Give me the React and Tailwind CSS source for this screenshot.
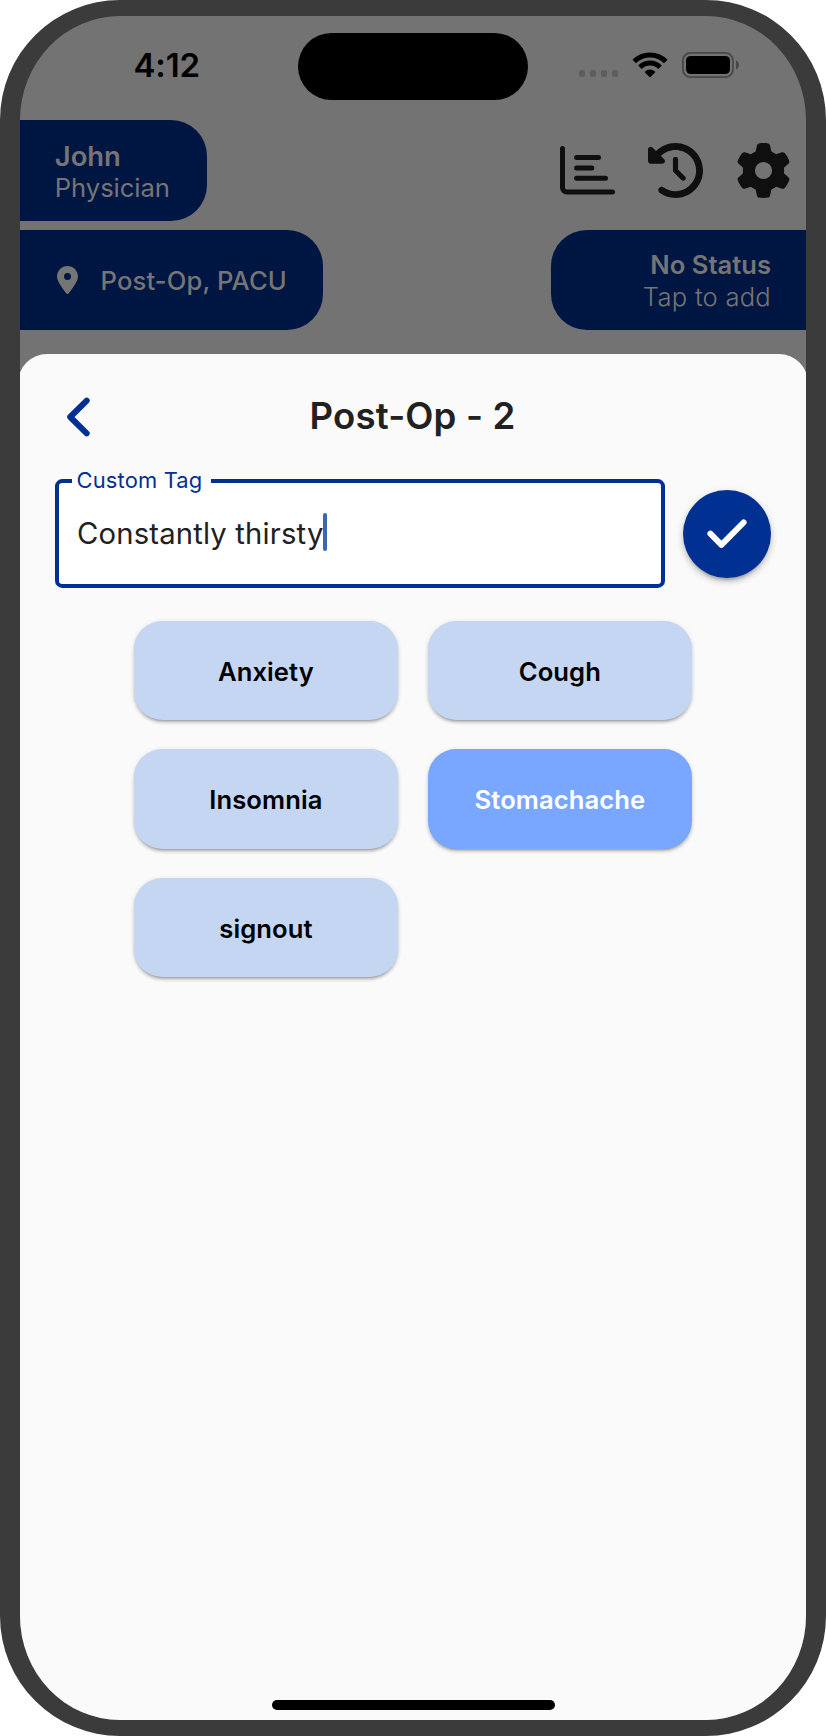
import React from "react";
import { FaClockRotateLeft, FaGear, FaLocationDot } from "react-icons/fa6";

const tags = [
  { label: "Anxiety" },
  { label: "Cough" },
  { label: "Insomnia" },
  { label: "Stomachache", selected: true },
  { label: "signout" },
];

function WifiIcon() {
  return (
    <svg width="36" height="26" viewBox="0 0 36 26" fill="none" stroke="black" strokeWidth="5">
      <path d="M2.230 9.530a22.300 22.300 0 0 1 31.540 0" />
      <path d="M7.960 15.260a14.200 14.200 0 0 1 20.080 0" />
      <path d="M18 24.600l-4.600-4.600a6.500 6.500 0 0 1 9.200 0z" fill="black" stroke="black" strokeWidth="1.200" strokeLinejoin="round" />
    </svg>
  );
}

function BatteryIcon() {
  return (
    <svg width="58" height="26" viewBox="0 0 58 26" fill="none">
      <rect x="0.9" y="0.9" width="50" height="24.200" rx="7.400" stroke="#484848" strokeWidth="1.800" />
      <rect x="4" y="3.900" width="44" height="18.200" rx="4.800" fill="black" />
      <path d="M54 8.600c1.800.8 3 2.400 3 4.400s-1.200 3.600-3 4.400z" fill="#484848" />
    </svg>
  );
}

function ChartIcon() {
  return (
    <svg width="55" height="55" viewBox="0 0 55 55" fill="none" stroke="#0f0f0f" strokeWidth="5" strokeLinecap="round" strokeLinejoin="round">
      <path d="M2.500 5.600V44.700a4.300 4.300 0 0 0 4.300 4.300H52.500" />
      <path d="M16.600 14.500H38.500M16.600 24.900H31.800M16.600 35.300H45.500" />
    </svg>
  );
}

function StatusBar() {
  return (
    <div className="flex h-[104.300px] shrink-0 pt-[16.500px]">
      <div className="flex h-[66px] w-[277.700px] items-center pl-[113.500px] text-[33px] leading-none font-semibold tracking-[-0.150px] text-black">
        4:12
      </div>
      <div className="h-[67.200px] w-[230.600px] rounded-full bg-black" />
      <div className="flex h-[65px] items-center pl-[50.400px]">
        <div className="mt-[17.500px] flex gap-[4.200px]">
          {[0, 1, 2, 3].map((i) => (
            <span key={i} className="size-[6.800px] rounded-[2.300px] bg-[#5d5d5d]" />
          ))}
        </div>
        <div className="ml-[13.200px]">
          <WifiIcon />
        </div>
        <div className="ml-[14px]">
          <BatteryIcon />
        </div>
      </div>
    </div>
  );
}

function Header() {
  return (
    <>
      <div className="flex h-[101px] shrink-0 items-center justify-between">
        <div className="h-full w-[187.300px] rounded-r-[36px] bg-[#001642] pt-[19.700px] pl-[34.800px] leading-[32.200px] text-[#757575]">
          <div className="text-[27.400px] font-semibold">John</div>
          <div className="text-[25.600px] tracking-[-0.050px]">Physician</div>
        </div>
        <div className="flex gap-[33px] pr-[15px] text-[#0f0f0f]">
          <ChartIcon />
          <FaClockRotateLeft className="size-[55px]" />
          <FaGear className="size-[55px]" />
        </div>
      </div>
      <div className="mt-[9.200px] flex h-[99.500px] shrink-0 justify-between text-[25.600px] text-[#757575]">
        <div className="flex w-[303px] items-center rounded-r-[36px] bg-[#001642] pt-[2px] pl-[37.300px] font-medium tracking-[0.120px]">
          <FaLocationDot className="-mt-[2px] h-[28px] w-[21px]" />
          <span className="ml-[22.300px]">Post-Op, PACU</span>
        </div>
        <div className="w-[255.200px] rounded-l-[36px] bg-[#001642] pt-[19px] pr-[35px] text-right leading-[31.500px]">
          <div className="font-semibold">No Status</div>
          <div className="font-light tracking-[0.240px]">Tap to add</div>
        </div>
      </div>
    </>
  );
}

function TagForm() {
  return (
    <div className="mt-[41px] flex items-center pl-[37px]">
      <div className="relative flex h-[108.700px] w-[610px] items-center rounded-[7.300px] border-4 border-[#003092] bg-white pl-[18px]">
        <div className="absolute -top-[15.500px] left-[12.500px] flex h-[25px] w-[139.800px] items-center pl-[5px] text-[21.900px] tracking-[0.180px] text-[#003092]">
          <span className="absolute inset-x-0 top-[11.300px] h-[5px] bg-white" />
          <span className="relative">Custom Tag</span>
        </div>
        <span className="text-[29.250px] tracking-[0.170px] text-[#212121]">Constantly thirsty</span>
        <span className="-ml-[0.500px] -mt-[3px] h-[38.500px] w-[3.660px] rounded-full bg-[#4064ad]" />
      </div>
      <button className="ml-[18.300px] flex size-[88px] items-center justify-center rounded-full bg-[#003092] shadow-[0_5px_3px_-3px_rgba(0,0,0,0.2),0_4px_6px_0_rgba(0,0,0,0.14),0_2px_9px_0_rgba(0,0,0,0.12)]">
        <svg width="40" height="30" viewBox="0 0 40 30" fill="none" stroke="white" strokeWidth="6" strokeLinecap="round" strokeLinejoin="round">
          <path d="M3.400 14.700L14.400 25.900L36.600 3.500" />
        </svg>
      </button>
    </div>
  );
}

export default function App() {
  return (
    <div className="h-[1736px] w-[826px] bg-white">
      <div className="flex h-full w-full flex-col overflow-hidden rounded-[120px] border-x-[20px] border-y-[16px] border-[#3b3b3b] bg-[#737373] font-[Inter,sans-serif]">
        <StatusBar />
        <Header />
        <div className="-mx-[2px] mt-[24.300px] flex flex-1 flex-col rounded-t-[29px] bg-[#fafafa]">
          <div className="flex items-center pt-[41px]">
            <div className="w-[120px] shrink-0 pl-[49.400px]">
              <svg width="23" height="40" viewBox="0 0 23 40" fill="none" stroke="#003092" strokeWidth="6" strokeLinecap="round" strokeLinejoin="round">
                <path d="M19.700 3.600L3.200 20L19.700 36.300" />
              </svg>
            </div>
            <h1 className="-mt-[1px] flex-1 pr-[121px] text-center text-[36.600px] leading-[44px] font-semibold tracking-[0.150px] text-[#212121]">
              Post-Op - 2
            </h1>
          </div>
          <TagForm />
          <div className="mt-[33px] grid grid-cols-[264.600px_264.600px] gap-x-[29.400px] gap-y-[29.300px] pl-[115.600px]">
            {tags.map((tag) => (
              <button
                key={tag.label}
                className={`h-[99.200px] rounded-[28px] pt-[3px] text-[25.600px] font-semibold tracking-[0.080px] shadow-[0_4px_2px_-3px_rgba(0,0,0,0.2),0_3px_3px_0_rgba(0,0,0,0.14),0_1px_5px_0_rgba(0,0,0,0.12)] ${
                  tag.selected ? "bg-[#79a7ff] text-white" : "bg-[#c5d6f2] text-black"
                }`}
              >
                {tag.label}
              </button>
            ))}
          </div>
          <div className="mx-auto mt-auto mb-[10.500px] h-[9.500px] w-[283px] rounded-full bg-black" />
        </div>
      </div>
    </div>
  );
}
